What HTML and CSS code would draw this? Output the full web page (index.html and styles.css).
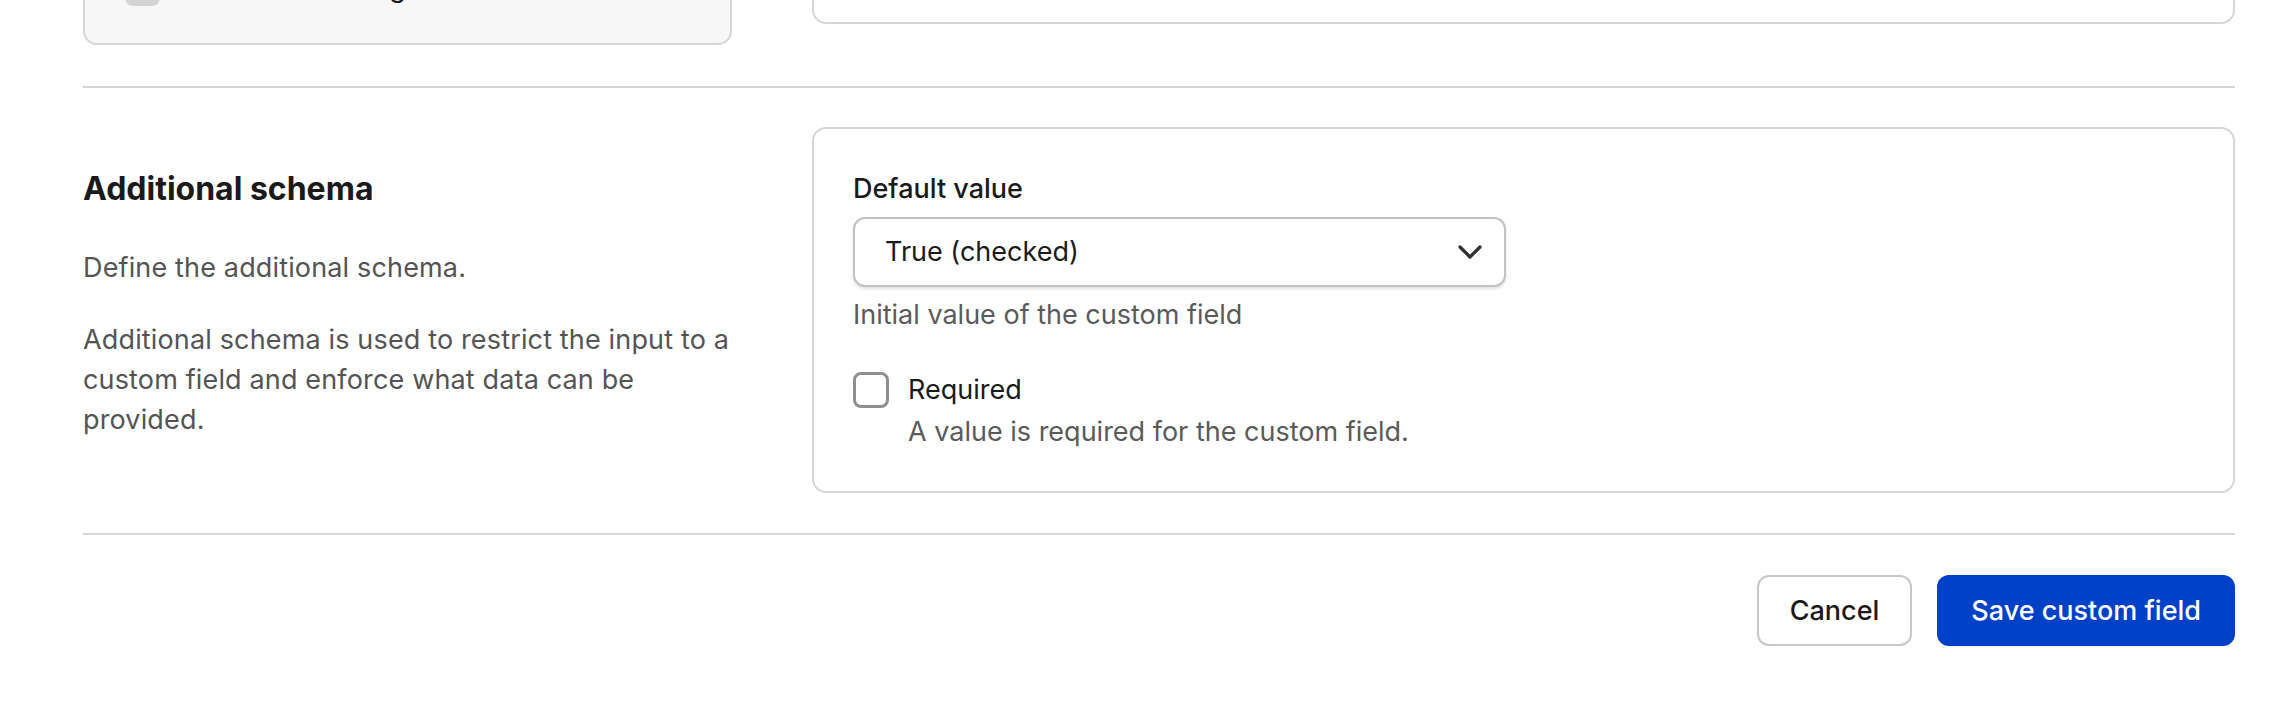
FILE: index.html
```html
<!DOCTYPE html>
<html lang="en">
<head>
<meta charset="utf-8">
<title>Custom field</title>
<link rel="stylesheet" href="styles.css">
</head>
<body>
<div class="page">
  <section class="section section--prev">
    <div class="card card--muted">
      <div class="check-row">
        <span class="checkbox checkbox--disabled"></span>
        <span class="check-label">Enable for sorting</span>
      </div>
    </div>
    <div class="card card--stub"></div>
  </section>

  <section class="section">
    <div class="intro">
      <h2 class="intro__title">Additional schema</h2>
      <p class="intro__text">Define the additional schema.</p>
      <p class="intro__text intro__text--spaced">Additional schema is used to restrict the input to a custom field and enforce what data can be provided.</p>
    </div>
    <div class="card card--form">
      <div class="field-label">Default value</div>
      <div class="select">
        <span class="select__value">True (checked)</span>
        <svg class="select__chevron" width="24" height="14" viewBox="0 0 24 14" aria-hidden="true"><path d="M2 2 L12 12 L22 2" fill="none" stroke="#303030" stroke-width="3.2" stroke-linecap="round" stroke-linejoin="round"/></svg>
      </div>
      <div class="help">Initial value of the custom field</div>
      <div class="check-row check-row--form">
        <span class="checkbox"></span>
        <span class="check-label">Required</span>
      </div>
      <div class="help help--indent">A value is required for the custom field.</div>
    </div>
  </section>

  <div class="actions">
    <button class="btn btn--secondary" type="button">Cancel</button>
    <button class="btn btn--primary" type="button">Save custom field</button>
  </div>
</div>
</body>
</html>
```

FILE: styles.css
```css
* { box-sizing: border-box; }

html, body {
  margin: 0;
  padding: 0;
  background: #ffffff;
  overflow: hidden;
}

body {
  font-family: Inter, "Liberation Sans", sans-serif;
  font-size: 27px;
  line-height: 40px;
  color: #1a1a1a;
}

.page {
  padding: 0 51px 0 83px;
}

.section {
  display: grid;
  grid-template-columns: 649px 1fr;
  column-gap: 80px;
  align-items: start;
  padding: 39px 0 40px;
  border-bottom: 2px solid #d6d6d6;
}

.section--prev {
  margin-top: -61px;
  padding-top: 0;
  padding-bottom: 41px;
}

.card {
  border: 2px solid #d6d6d6;
  border-radius: 14px;
  background: #ffffff;
}

.card--muted {
  background: #f7f7f7;
  padding: 30px 40px 38px;
}

.card--stub {
  height: 85px;
}

.card--form {
  padding: 40px 39px 39px;
}

.check-row {
  display: flex;
  align-items: center;
  height: 34px;
}

.check-row--form {
  height: 40px;
  margin-top: 35px;
}

.checkbox {
  flex: none;
  width: 35px;
  height: 35px;
  border: 3px solid #8f8f8f;
  border-radius: 8px;
  background: #ffffff;
  margin-right: 20px;
}

.check-row--form .checkbox {
  width: 36px;
  height: 36px;
  margin-right: 19px;
}

.checkbox--disabled {
  border-color: #d4d4d4;
  background: #d4d4d4;
}

.check-label {
  line-height: 34px;
  color: #1a1a1a;
}

.check-row--form .check-label {
  line-height: 40px;
}

.intro {
  padding-top: 42px;
}

.intro__title {
  margin: 0;
  font-size: 32px;
  line-height: 40px;
  font-weight: 700;
  color: #1a1a1a;
}

.intro__text {
  margin: 39px 0 0;
  color: #545454;
  letter-spacing: 0.15px;
}

.intro__text--spaced {
  margin-top: 32px;
}

.field-label {
  font-weight: 500;
  color: #1a1a1a;
}

.select {
  margin-top: 8px;
  width: 653px;
  height: 70px;
  border: 2px solid #c2c2c2;
  border-radius: 12px;
  background: #ffffff;
  box-shadow: 0 2px 3px rgba(0, 0, 0, 0.12);
  display: flex;
  align-items: center;
  justify-content: space-between;
  padding: 0 22px 0 30px;
}

.select__value {
  color: #1a1a1a;
}

.select__chevron {
  display: block;
}

.help {
  margin-top: 8px;
  color: #5a5a5a;
}

.help--indent {
  margin-top: 2px;
  padding-left: 55px;
}

.actions {
  display: flex;
  justify-content: flex-end;
  gap: 25px;
  padding-top: 40px;
}

.btn {
  font-family: inherit;
  font-size: 27px;
  line-height: 40px;
  font-weight: 500;
  height: 71px;
  border-radius: 12px;
  cursor: pointer;
}

.btn--secondary {
  background: #ffffff;
  color: #1a1a1a;
  border: 2px solid #c7c7c7;
  padding: 0 31px;
}

.btn--primary {
  background: #0041c8;
  color: #ffffff;
  border: 2px solid #0041c8;
  padding: 0 32px;
}
```
